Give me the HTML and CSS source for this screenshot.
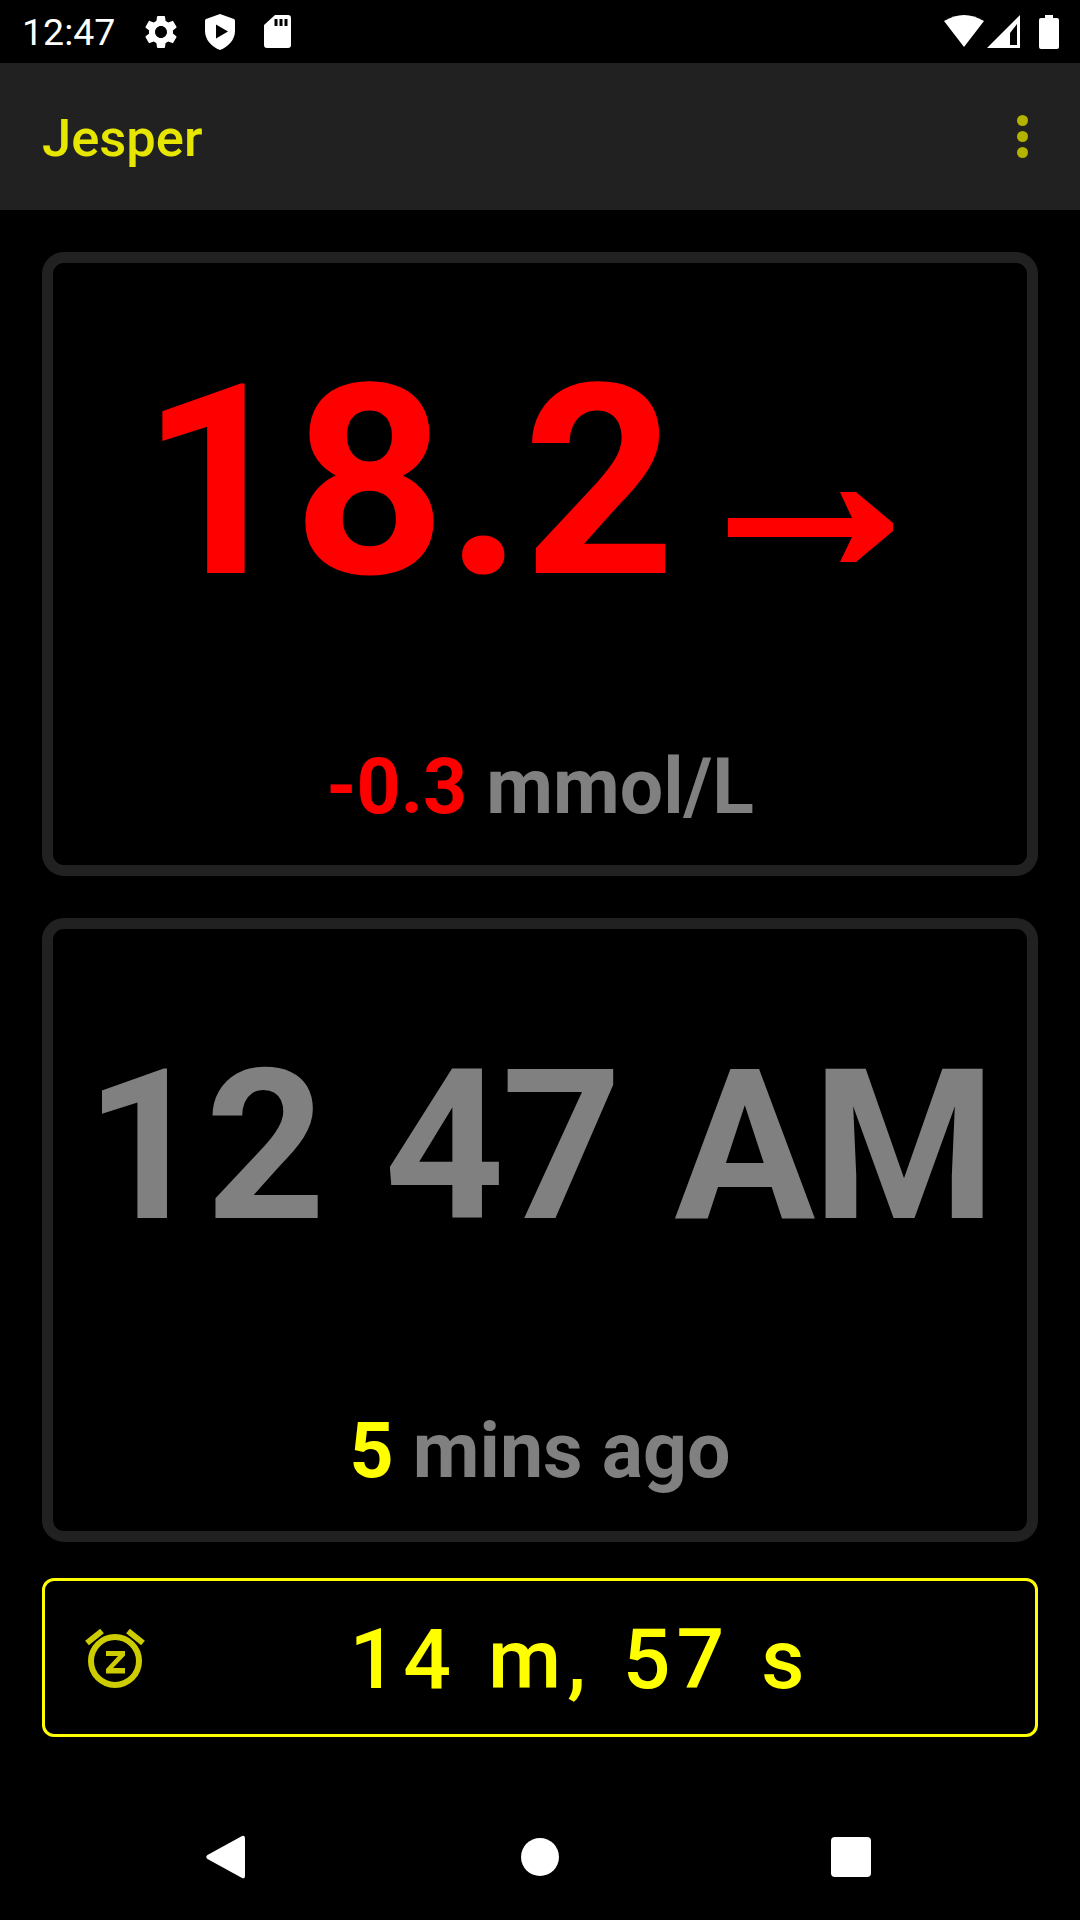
FILE: index.html
```html
<!DOCTYPE html>
<html lang="en">
<head>
<meta charset="utf-8">
<title>Jesper</title>
<link rel="stylesheet" href="styles.css">
</head>
<body>
<div class="phone">
  <header class="statusbar">
    <span class="clock">12:47</span>
    <svg class="st-icon gear" viewBox="0 0 24 24"><path fill="#fff" d="M19.14 12.94c.04-.3.06-.61.06-.94 0-.32-.02-.64-.07-.94l2.03-1.58a.49.49 0 0 0 .12-.61l-1.92-3.32a.488.488 0 0 0-.59-.22l-2.39.96c-.5-.38-1.03-.7-1.62-.94l-.36-2.54a.484.484 0 0 0-.48-.41h-3.84c-.24 0-.43.17-.47.41l-.36 2.54c-.59.24-1.13.57-1.62.94l-2.39-.96c-.22-.08-.47 0-.59.22L2.74 8.87c-.12.21-.08.47.12.61l2.03 1.58c-.05.3-.09.63-.09.94s.02.64.07.94l-2.03 1.58a.49.49 0 0 0-.12.61l1.92 3.32c.12.22.37.29.59.22l2.39-.96c.5.38 1.03.7 1.62.94l.36 2.54c.05.24.24.41.48.41h3.84c.24 0 .44-.17.47-.41l.36-2.54c.59-.24 1.13-.56 1.62-.94l2.39.96c.22.08.47 0 .59-.22l1.92-3.32c.12-.22.07-.47-.12-.61l-2.01-1.58zM12 15.6c-1.98 0-3.6-1.62-3.6-3.6s1.62-3.6 3.6-3.6 3.6 1.62 3.6 3.6-1.62 3.6-3.6 3.6z"/></svg>
    <svg class="st-icon shield" viewBox="0 0 30 36"><path fill="#fff" fill-rule="evenodd" d="M15 0 L29 5 Q30 5.400 30 7 V17 C30 26 23 33 15 36 C7 33 0 26 0 17 V7 Q0 5.400 1 5 Z M11 10.500 V24.500 L23 17.500 Z"/></svg>
    <svg class="st-icon sd" viewBox="0 0 27 33"><path fill="#fff" fill-rule="evenodd" d="M11 0 H24 Q27 0 27 3 V30 Q27 33 24 33 H3 Q0 33 0 30 V10 Z M10.500 4 V11 H13.500 V4 Z M15.500 4 V11 H18.500 V4 Z M20.500 4 V11 H23.500 V4 Z"/></svg>
    <span class="spacer"></span>
    <svg class="st-icon wifi" viewBox="0 0 40 33"><path fill="#fff" d="M0 6 Q20 -6 40 6 L20 32 Z"/></svg>
    <svg class="st-icon signal" viewBox="0 0 33 33"><path fill="#fff" fill-rule="evenodd" d="M33 0 V33 H0 Z M30 9 L23 18 V30 H30 Z"/></svg>
    <svg class="st-icon battery" viewBox="0 0 20 34"><path fill="#fff" d="M6 0 H14 V3 H18 Q20 3 20 5 V32 Q20 34 18 34 H2 Q0 34 0 32 V5 Q0 3 2 3 H6 Z"/></svg>
  </header>

  <div class="toolbar">
    <h1 class="title">Jesper</h1>
    <div class="overflow"><i></i><i></i><i></i></div>
  </div>

  <main class="content">
    <section class="card card-glucose">
      <div class="reading">
        <span class="value">18.2</span>
        <svg class="arrow" viewBox="0 0 166 70"><path fill="#f00" d="M0 26 H124 L112 0 H128 L165 31 V39 L128 70 H112 L124 45 H0 Z"/></svg>
      </div>
      <p class="sub"><span class="red">-0.3</span> mmol/L</p>
    </section>

    <section class="card card-time">
      <div class="time"><span class="hours">12</span> <span class="minutes">47</span> <span class="ampm">AM</span></div>
      <p class="sub"><span class="yellow">5</span> mins ago</p>
    </section>

    <section class="snooze">
      <svg class="alarm" viewBox="0 0 60 60"><g fill="none" stroke="#cccc00"><circle cx="30" cy="33" r="24" stroke-width="6"/><path stroke-width="6" d="M2 15 L17 3 M58 15 L43 3"/></g><path fill="#cccc00" d="M21 23 H40 V27.500 L28 40 H40 V45.500 H21 V41 L33 28 H21 Z"/></svg>
      <span class="countdown">14 m, 57 s</span>
    </section>
  </main>

  <nav class="navbar">
    <svg class="nav back" viewBox="0 0 40 44"><path fill="#fff" d="M37 0.500 Q40 -1 40 3 V41 Q40 45 37 43.500 L1.500 24 Q-1 22 1.500 20 Z"/></svg>
    <span class="nav home"></span>
    <span class="nav recent"></span>
  </nav>
</div>
</body>
</html>
```
FILE: styles.css
```css
* { box-sizing: border-box; }
html, body { margin: 0; padding: 0; background: #000; }
.phone {
  width: 1080px; height: 1920px; display: flex; flex-direction: column;
  background: #000; font-family: Roboto, sans-serif; overflow: hidden;
}
.statusbar { height: 63px; flex: none; display: flex; align-items: center; padding: 0 21px 0 22px; }
.clock { color: #fff; font-size: 37.500px; width: 119px; }
.st-icon { display: block; flex: none; }
.gear { width: 40px; height: 40px; }
.shield { width: 30px; height: 36px; margin-left: 24px; }
.sd { width: 27px; height: 33px; margin-left: 29px; }
.spacer { flex: 1; }
.wifi { width: 40px; height: 33px; }
.signal { width: 33px; height: 33px; margin-left: 3px; }
.battery { width: 20px; height: 34px; margin-left: 19px; }

.toolbar { height: 147px; flex: none; background: #212121; display: flex; align-items: center; justify-content: space-between; padding: 0 52px 0 42px; }
.title { margin: 3px 0 0; color: #e6e600; font-size: 52.500px; font-weight: 500; }
.overflow { display: flex; flex-direction: column; gap: 5px; }
.overflow i { display: block; width: 11px; height: 11px; border-radius: 50%; background: #b3b300; }

.content { flex: 1; display: flex; flex-direction: column; padding: 42px 42px 0; }
.card { border: 11px solid #212121; border-radius: 22px; height: 624px; display: flex; flex-direction: column; align-items: center; }
.card-time { margin-top: 42px; }
.reading { height: 375px; display: flex; align-items: flex-end; padding-right: 46px; flex: none; }
.value { color: #f00; font-size: 266px; font-weight: 700; line-height: 312px; }
.arrow { width: 166px; height: 70px; margin: 0 0 76px 52px; }
.sub { margin: 104px 0 0; color: #808080; font-size: 77px; font-weight: 700; line-height: 90px; }
.red { color: #f00; }
.yellow { color: #ffff00; }
.time { color: #808080; font-size: 210px; font-weight: 700; line-height: 246px; margin-top: 94px; padding-right: 2px; white-space: nowrap; }
.hours { margin-right: 6px; }
.minutes { letter-spacing: -3px; margin-right: 3px; }
.ampm { letter-spacing: -3px; }
.card-time .sub { margin-top: 137px; }

.snooze { position: relative; height: 159px; margin-top: 36px; border: 3px solid #ffff00; border-radius: 12px; display: flex; align-items: center; justify-content: center; }
.alarm { position: absolute; left: 40px; top: 47px; width: 60px; height: 60px; }
.countdown { color: #ffff00; font-size: 84px; font-weight: 550; letter-spacing: 6px; word-spacing: 4px; margin-left: 80px; margin-top: 4px; }

.navbar { height: 126px; flex: none; display: flex; align-items: center; padding: 0 0 0 206px; }
.nav { display: block; flex: none; }
.back { width: 39px; height: 44px; }
.home { width: 38px; height: 38px; margin-left: 276px; border-radius: 50%; background: #fff; }
.recent { width: 40px; height: 40px; margin-left: 272px; border-radius: 4px; background: #fff; }
```
